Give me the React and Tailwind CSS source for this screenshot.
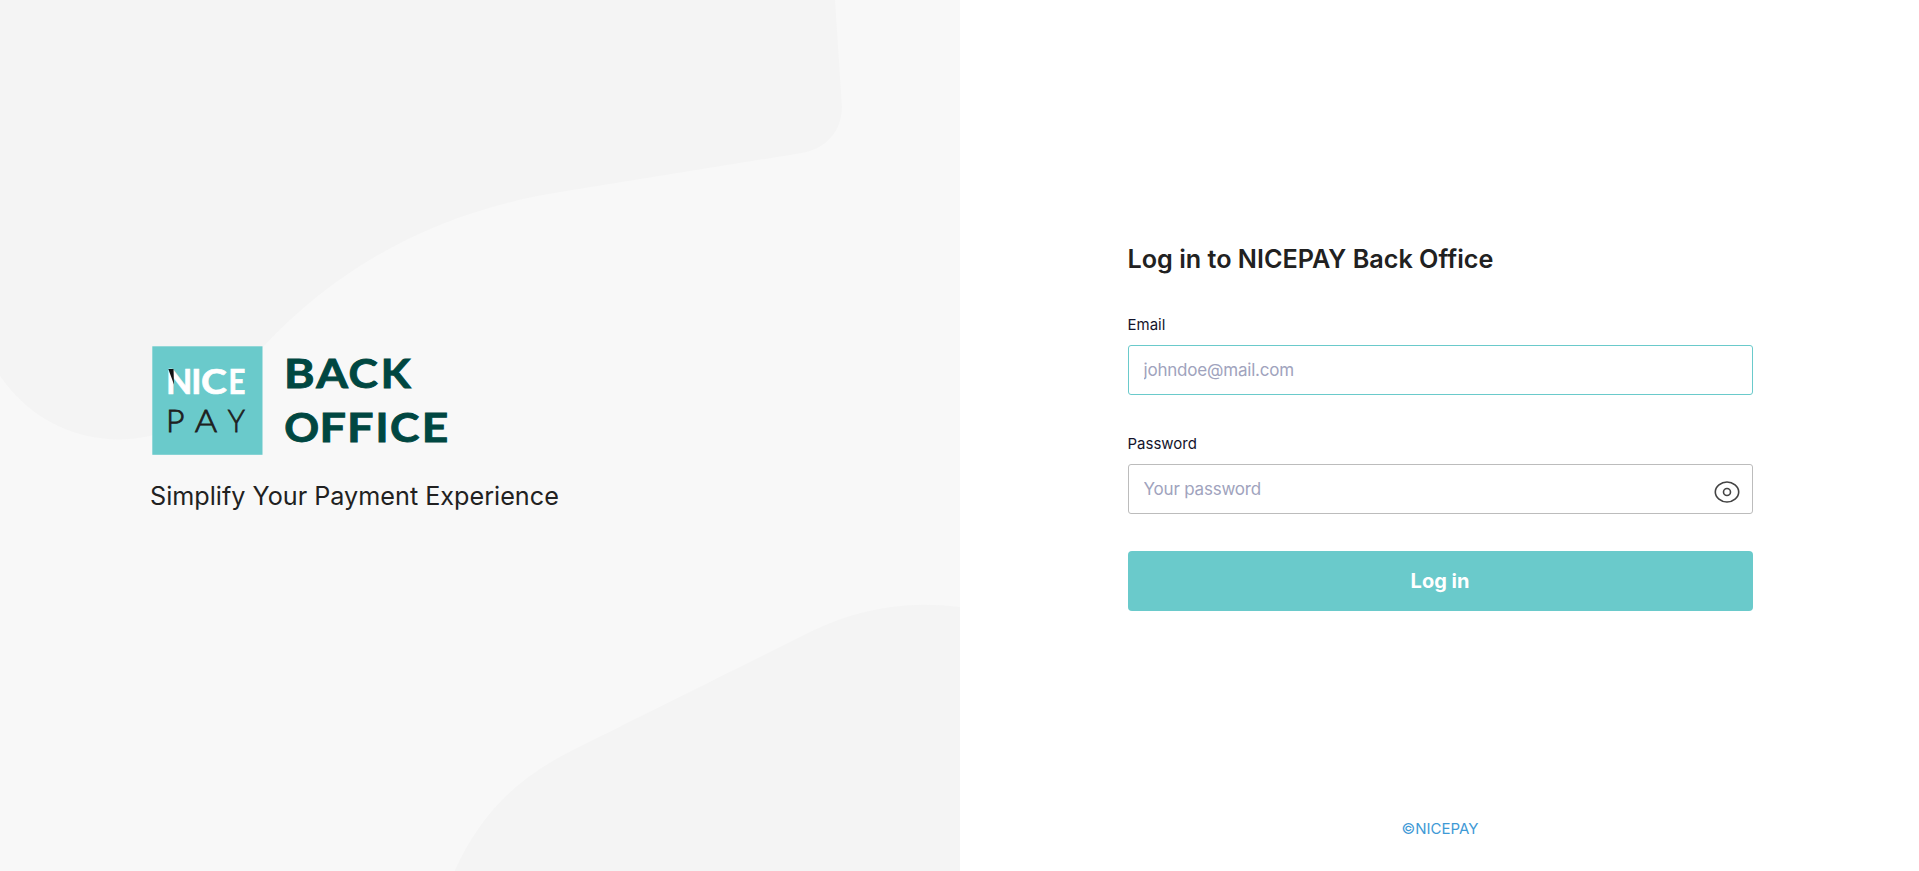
import React from "react";

// [character, left edge of the ink, left side bearing in em, horizontal stretch]
const BACK = [["B", 287.7, 0.081, 1.16], ["A", 316.5, 0.006, 1.14], ["C", 350.3, 0.04, 1.11], ["K", 384.3, 0.081, 1.09]];
const OFFICE = [["O", 286.1, 0.04, 1.08], ["F", 323.3, 0.081, 1.17], ["F", 350.8, 0.081, 1.17], ["I", 379, 0.077, 1.1], ["C", 391.7, 0.04, 1.11], ["E", 425.4, 0.081, 1.15]];
const NICE = [["N", 168.8, 0.081, 1], ["I", 194, 0.077, 1], ["C", 202.5, 0.04, 1.14], ["E", 231, 0.081, 0.86]];
const PAY = [["P", 169, 0.09, 1], ["A", 195, 0.01, 1.07], ["Y", 228, 0.01, 0.9]];

function Word({ letters, y, size, weight, fill, bolder }) {
  return (
    <g fontFamily="Lato, sans-serif" fontSize={size} fontWeight={weight} fill={fill} stroke={fill} strokeWidth={bolder}>
      {letters.map(([ch, left, bearing, stretch], i) => (
        <text key={i} transform={`translate(${left - 150 - bearing * size * stretch} ${y - 344}) scale(${stretch} 1)`}>
          {ch}
        </text>
      ))}
    </g>
  );
}

function Logo() {
  return (
    <svg width="300" height="112" viewBox="0 0 300 112" className="block">
      <rect x="2.3" y="2.3" width="110.2" height="108.5" fill="#6acacb" />
      <Word letters={NICE} y={394} size={34.2} weight={700} fill="#fff" bolder={0.7} />
      <path d="M18.300 24.900H23.500L24 40.500Z" fill="#111" />
      <Word letters={PAY} y={432.4} size={32} weight={300} fill="#1f1f1f" bolder={0.8} />
      <Word letters={BACK} y={387.9} size={40} weight={700} fill="#004741" bolder={0.9} />
      <Word letters={OFFICE} y={441.9} size={40} weight={700} fill="#004741" bolder={0.9} />
    </svg>
  );
}

function EyeIcon() {
  return (
    <svg width="26" height="24" viewBox="0 0 26 24" fill="none" stroke="#434343" strokeWidth="1.6">
      <path d="M1.300 12C1.300 6.500 7.200 2 13 2s11.700 4.500 11.700 10S18.800 22 13 22 1.300 17.500 1.300 12Z" />
      <circle cx="13" cy="12" r="3.500" />
    </svg>
  );
}

export default function App() {
  return (
    <div className="flex h-[871px] w-full bg-white font-['Inter',sans-serif] text-[#212121] [font-optical-sizing:none]">
      <section className="relative w-[960px] shrink-0 overflow-hidden bg-[#f8f8f8]">
        <svg className="absolute inset-0" width="960" height="871" viewBox="0 0 960 871" fill="#f4f4f4">
          <path d="M0 0H835L841.800 105C843 129 827 149 802 153L560 192C440 211 340 264 263 347L190 418C150 449 55 455 0 376Z" />
          <path d="M454.600 871C480 815 515 779 573 750L810 632C846 614 885 604.700 924 604.700Q942 604.700 960 607V871Z" />
        </svg>
        <div className="relative flex flex-col pl-[150px] pt-[344px]">
          <Logo />
          <p className="mt-[22px] text-[25.2px] leading-9">Simplify Your Payment Experience</p>
        </div>
      </section>

      <main className="flex flex-1 flex-col items-center pl-px">
        <form className="flex w-[625px] flex-col pt-[241px]" onSubmit={(e) => e.preventDefault()}>
          <h1 className="text-[25.2px] font-semibold leading-9">Log in to NICEPAY Back Office</h1>
          <label htmlFor="email" className="mt-[37px] text-[15px] leading-[21px] text-[#14142b]">Email</label>
          <input
            id="email"
            type="email"
            placeholder="johndoe@mail.com"
            className="mt-[10px] h-[50px] rounded-[3px] border border-[#6acacb] px-[15px] text-[17px] tracking-[-0.2px] outline-none placeholder:text-[#a0a3bd]"
          />
          <label htmlFor="password" className="mt-[38px] text-[15px] leading-[21px] text-[#14142b]">Password</label>
          <div className="mt-[10px] flex h-[50px] items-center rounded-[3px] border border-[#bcbcbc] pl-[15px] pr-[12px]">
            <input
              id="password"
              type="password"
              placeholder="Your password"
              className="h-full min-w-0 flex-1 text-[17px] tracking-[-0.2px] outline-none placeholder:text-[#a0a3bd]"
            />
            <button type="button" aria-label="Show password" className="mt-[5px]">
              <EyeIcon />
            </button>
          </div>
          <button type="submit" className="mt-[37px] h-[60px] rounded-[4px] bg-[#6acacb] text-xl font-bold text-white">
            Log in
          </button>
        </form>
        <footer className="mt-auto pb-[32px] text-[15px] leading-[21px] text-[#3f9ad6]">©NICEPAY</footer>
      </main>
    </div>
  );
}
